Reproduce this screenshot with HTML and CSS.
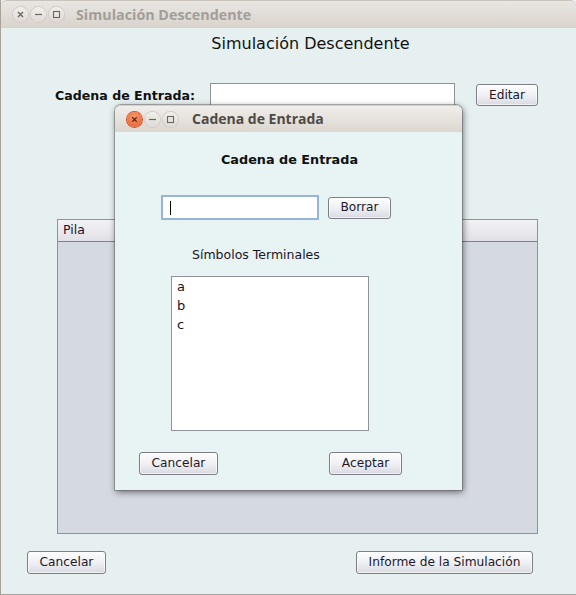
FILE: index.html
```html
<!DOCTYPE html>
<html>
<head>
<meta charset="utf-8">
<link rel="stylesheet" href="styles.css">
</head>
<body>
<div class="window">
  <div class="titlebar">
    <div class="wbtns">
      <span class="wbtn"><svg width="15" height="15" viewBox="0 0 15 15"><path d="M5 5l5 5M10 5l-5 5" stroke="#6a6660" stroke-width="1.4"/></svg></span>
      <span class="wbtn"><svg width="15" height="15" viewBox="0 0 15 15"><path d="M4 7.5h7" stroke="#6a6660" stroke-width="1.2"/></svg></span>
      <span class="wbtn"><svg width="15" height="15" viewBox="0 0 15 15"><rect x="4.5" y="4.5" width="6" height="6" fill="none" stroke="#6a6660" stroke-width="1.1"/></svg></span>
    </div>
    <span class="wtitle inactive">Simulación Descendente</span>
  </div>
  <div class="content">
    <div class="heading">Simulación Descendente</div>
    <div class="entry-row">
      <span class="label">Cadena de Entrada:</span>
      <div class="field main-field"></div>
      <button class="btn btn-editar">Editar</button>
    </div>
    <div class="table">
      <div class="thead"><span class="th">Pila</span><span class="th-rest"></span></div>
      <div class="tbody"></div>
    </div>
    <div class="bottom-row">
      <button class="btn btn-cancel">Cancelar</button>
      <button class="btn btn-informe">Informe de la Simulación</button>
    </div>
  </div>
</div>

<div class="dialog">
  <div class="titlebar dtitlebar">
    <div class="wbtns">
      <span class="wbtn close"><svg width="15" height="15" viewBox="0 0 15 15"><path d="M5.3 5.3l4.4 4.4M9.7 5.3l-4.4 4.4" stroke="#5a2a18" stroke-width="1.3"/></svg></span>
      <span class="wbtn"><svg width="15" height="15" viewBox="0 0 15 15"><path d="M4 7.5h7" stroke="#6a6660" stroke-width="1.2"/></svg></span>
      <span class="wbtn"><svg width="15" height="15" viewBox="0 0 15 15"><rect x="4.5" y="4.5" width="6" height="6" fill="none" stroke="#6a6660" stroke-width="1.1"/></svg></span>
    </div>
    <span class="wtitle">Cadena de Entrada</span>
  </div>
  <div class="dcontent">
    <div class="dheading">Cadena de Entrada</div>
    <div class="drow">
      <div class="field dfield"><span class="caret"></span></div>
      <button class="btn btn-borrar">Borrar</button>
    </div>
    <div class="dlabel">Símbolos Terminales</div>
    <div class="list">
      <div class="item">a</div>
      <div class="item">b</div>
      <div class="item">c</div>
    </div>
    <div class="dbuttons">
      <button class="btn btn-dcancel">Cancelar</button>
      <button class="btn btn-aceptar">Aceptar</button>
    </div>
  </div>
</div>
</body>
</html>
```

FILE: styles.css
```css
html, body {
  margin: 0;
  padding: 0;
}
body {
  width: 576px;
  height: 595px;
  overflow: hidden;
  position: relative;
  background: #e7f0f1;
  font-family: "DejaVu Sans", sans-serif;
  font-size: 12.5px;
  color: #1c1520;
}
.window {
  width: 575px;
  height: 594px;
  border-left: 1px solid #a8a298;
  border-bottom: 1px solid #a8a298;
  display: flex;
  flex-direction: column;
  background: #e7f0f1;
}
.titlebar {
  height: 27px;
  border-top: 1px solid #c9c3bb;
  border-radius: 6px 6px 0 0;
  background: linear-gradient(#e9e6e2, #d9d3cc);
  display: flex;
  align-items: center;
  flex-shrink: 0;
}
.wbtns {
  display: flex;
  gap: 3px;
  margin-left: 12px;
}
.wbtn {
  width: 15px;
  height: 15px;
  border-radius: 50%;
  background: linear-gradient(#f1eeeb, #dedad5);
  box-shadow: 0 0 0 1px #d2ccc5;
  display: flex;
}
.wbtn.close {
  background: radial-gradient(circle at 50% 35%, #f79a6c, #e9592a);
  box-shadow: 0 0 0 1px #c9562f;
}
.wtitle {
  font-family: "Open Sans", sans-serif;
  font-weight: bold;
  font-size: 14px;
  color: #4e4b47;
  margin-left: 14px;
  margin-top: -1px;
}
.wtitle.inactive {
  color: #a29e99;
  font-size: 14.3px;
  margin-left: 12px;
}
.content {
  display: flex;
  flex-direction: column;
  flex: 1;
}
.heading {
  margin-top: 6px;
  height: 20px;
  line-height: 20px;
  font-size: 16px;
  text-align: center;
  padding-left: 44px;
  color: #111;
}
.entry-row {
  margin-top: 29px;
  display: flex;
  align-items: center;
  height: 24px;
}
.label {
  font-weight: bold;
  font-size: 12.6px;
  margin-left: 54px;
  width: 155px;
  color: #111;
}
.field {
  background: #fff;
  border: 1px solid #8c9098;
  box-sizing: border-box;
}
.main-field {
  width: 245px;
  height: 24px;
  border-color: #8f9398;
}
.btn {
  font-family: "DejaVu Sans", sans-serif;
  font-size: 12.2px;
  color: #221828;
  border: 1px solid #7d7f86;
  border-radius: 3px;
  background: linear-gradient(#fdfdfe, #eeeff3 55%, #d9dae1);
  box-shadow: inset 0 0 0 1px rgba(255,255,255,0.6);
  padding: 0;
  box-sizing: border-box;
  height: 22px;
  line-height: 19px;
}
.btn-editar {
  width: 62px;
  height: 22px;
  margin-left: 21px;
}
.table {
  margin-top: 112px;
  margin-left: 56px;
  width: 481px;
  height: 315px;
  border: 1px solid #8e949c;
  box-sizing: border-box;
  display: flex;
  flex-direction: column;
}
.thead {
  height: 21px;
  display: flex;
  border-bottom: 1px solid #7f848c;
  background: linear-gradient(#f3f3f6, #e0e0e6);
  flex-shrink: 0;
}
.th {
  padding-left: 5px;
  line-height: 20px;
  color: #1c1030;
}
.tbody {
  flex: 1;
  background: #d5d9e1;
}
.bottom-row {
  margin-top: 17px;
  display: flex;
  height: 23px;
}
.btn-cancel {
  width: 79px;
  height: 23px;
  margin-left: 26px;
}
.btn-informe {
  width: 177px;
  height: 23px;
  margin-left: 250px;
}

/* dialog window overlay */
.dialog {
  position: absolute;
  left: 115px;
  top: 105px;
  width: 347px;
  height: 385px;
  display: flex;
  flex-direction: column;
  border-radius: 6px 6px 0 0;
  box-shadow: 0 0 0 1px rgba(90,90,90,0.45), 1px 2px 7px rgba(0,0,0,0.55);
  background: #e8f3f3;
}
.dtitlebar {
  height: 26px;
  border-top: 1px solid #d5d0ca;
  background: linear-gradient(#f0eeeb, #dcd6cf);
}
.dcontent {
  flex: 1;
  display: flex;
  flex-direction: column;
  background: #e8f3f3;
}
.dheading {
  margin-top: 19px;
  font-weight: bold;
  font-size: 12.8px;
  text-align: center;
  line-height: 18px;
  padding-left: 2px;
  color: #111;
}
.drow {
  margin-top: 26px;
  display: flex;
  align-items: center;
  height: 25px;
}
.dfield {
  margin-left: 46px;
  width: 158px;
  height: 25px;
  border: 2px solid #97b5d6;
  position: relative;
}
.caret {
  position: absolute;
  left: 7px;
  top: 4px;
  width: 1px;
  height: 14px;
  background: #000;
}
.btn-borrar {
  width: 63px;
  height: 22px;
  margin-left: 9px;
}
.dlabel {
  margin-top: 26px;
  margin-left: 77px;
  line-height: 18px;
  color: #1a1428;
}
.list {
  margin-top: 12px;
  margin-left: 56px;
  width: 198px;
  height: 155px;
  background: #fff;
  border: 1px solid #8f949b;
  box-sizing: border-box;
  padding-top: 0;
}
.item {
  padding-left: 5px;
  height: 19px;
  line-height: 19px;
  font-size: 13px;
  color: #1c1020;
}
.dbuttons {
  margin-top: 21px;
  display: flex;
  height: 23px;
}
.btn-dcancel {
  width: 79px;
  height: 23px;
  margin-left: 24px;
}
.btn-aceptar {
  width: 73px;
  height: 23px;
  margin-left: 111px;
}
```
